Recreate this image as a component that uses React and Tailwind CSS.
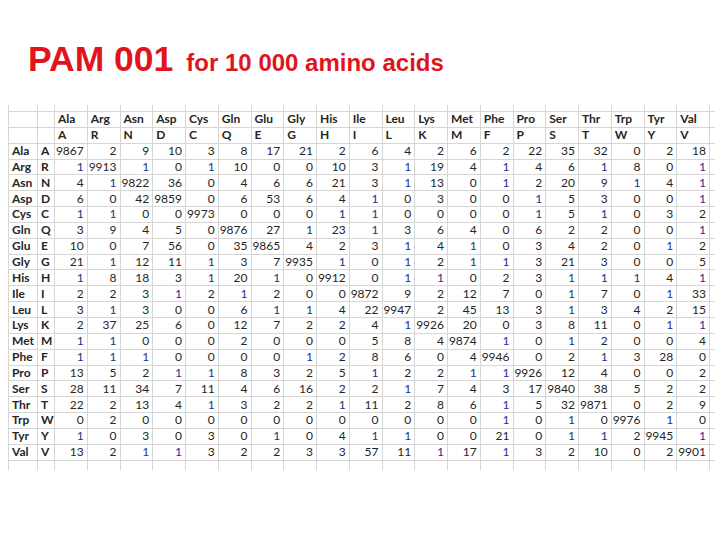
import React from 'react';

const AMINO = [
    ['Ala', 'A'], ['Arg', 'R'], ['Asn', 'N'], ['Asp', 'D'], ['Cys', 'C'],
    ['Gln', 'Q'], ['Glu', 'E'], ['Gly', 'G'], ['His', 'H'], ['Ile', 'I'],
    ['Leu', 'L'], ['Lys', 'K'], ['Met', 'M'], ['Phe', 'F'], ['Pro', 'P'],
    ['Ser', 'S'], ['Thr', 'T'], ['Trp', 'W'], ['Tyr', 'Y'], ['Val', 'V'],
];

const PAM = [
    [9867, 2, 9, 10, 3, 8, 17, 21, 2, 6, 4, 2, 6, 2, 22, 35, 32, 0, 2, 18],
    [1, 9913, 1, 0, 1, 10, 0, 0, 10, 3, 1, 19, 4, 1, 4, 6, 1, 8, 0, 1],
    [4, 1, 9822, 36, 0, 4, 6, 6, 21, 3, 1, 13, 0, 1, 2, 20, 9, 1, 4, 1],
    [6, 0, 42, 9859, 0, 6, 53, 6, 4, 1, 0, 3, 0, 0, 1, 5, 3, 0, 0, 1],
    [1, 1, 0, 0, 9973, 0, 0, 0, 1, 1, 0, 0, 0, 0, 1, 5, 1, 0, 3, 2],
    [3, 9, 4, 5, 0, 9876, 27, 1, 23, 1, 3, 6, 4, 0, 6, 2, 2, 0, 0, 1],
    [10, 0, 7, 56, 0, 35, 9865, 4, 2, 3, 1, 4, 1, 0, 3, 4, 2, 0, 1, 2],
    [21, 1, 12, 11, 1, 3, 7, 9935, 1, 0, 1, 2, 1, 1, 3, 21, 3, 0, 0, 5],
    [1, 8, 18, 3, 1, 20, 1, 0, 9912, 0, 1, 1, 0, 2, 3, 1, 1, 1, 4, 1],
    [2, 2, 3, 1, 2, 1, 2, 0, 0, 9872, 9, 2, 12, 7, 0, 1, 7, 0, 1, 33],
    [3, 1, 3, 0, 0, 6, 1, 1, 4, 22, 9947, 2, 45, 13, 3, 1, 3, 4, 2, 15],
    [2, 37, 25, 6, 0, 12, 7, 2, 2, 4, 1, 9926, 20, 0, 3, 8, 11, 0, 1, 1],
    [1, 1, 0, 0, 0, 2, 0, 0, 0, 5, 8, 4, 9874, 1, 0, 1, 2, 0, 0, 4],
    [1, 1, 1, 0, 0, 0, 0, 1, 2, 8, 6, 0, 4, 9946, 0, 2, 1, 3, 28, 0],
    [13, 5, 2, 1, 1, 8, 3, 2, 5, 1, 2, 2, 1, 1, 9926, 12, 4, 0, 0, 2],
    [28, 11, 34, 7, 11, 4, 6, 16, 2, 2, 1, 7, 4, 3, 17, 9840, 38, 5, 2, 2],
    [22, 2, 13, 4, 1, 3, 2, 2, 1, 11, 2, 8, 6, 1, 5, 32, 9871, 0, 2, 9],
    [0, 2, 0, 0, 0, 0, 0, 0, 0, 0, 0, 0, 0, 1, 0, 1, 0, 9976, 1, 0],
    [1, 0, 3, 0, 3, 0, 1, 0, 4, 1, 1, 0, 0, 21, 0, 1, 1, 2, 9945, 1],
    [13, 2, 1, 1, 3, 2, 2, 3, 3, 57, 11, 1, 17, 1, 3, 2, 10, 0, 2, 9901],
];

const line = 'border-[#d6d6d6]';

// one spreadsheet row: label, code, 20 values, then the little overhang cell on the right
const SheetRow = ({ label, code, values, bold }) => (
    <>
        <div className={`border-l border-r border-b ${line} pl-[3px] flex items-center font-bold`}>{label}</div>
        <div className={`border-r border-b ${line} pl-[3px] flex items-center font-bold`}>{code}</div>
        {values.map((v, i) => (
            bold ? (
                <div key={i} className={`border-r border-b ${line} pl-[3px] flex items-center font-bold`}>{v}</div>
            ) : (
                <div
                    key={i}
                    className={`border-r border-b ${line} pr-[3px] flex items-center justify-end ${v === 1 ? 'text-[#22318a]' : 'text-[#262626]'}`}
                >
                    {v}
                </div>
            )
        ))}
        <div className={`border-b ${line}`} />
    </>
);

const App = () => {
    const names = AMINO.map(a => a[0]);
    const codes = AMINO.map(a => a[1]);

    return (
        <div className="w-[720px] h-[540px] bg-white overflow-hidden">
            {/* Title */}
            <div className="pt-[42px] pl-[28px] flex items-baseline gap-[13px] text-[#e0141c] font-bold font-['Liberation_Sans',Arial,sans-serif]">
                <span className="text-[35.5px] leading-[35px]">PAM 001</span>
                <span className="text-[24px] leading-[24px]">for 10 000 amino acids</span>
            </div>

            {/* Matrix */}
            <div className="mt-[28px] ml-[8px] grid grid-cols-[30px_17px_repeat(20,32.75px)_5px] grid-rows-[7px_repeat(22,15.85px)_9px] text-[12px] leading-none text-[#262626] font-['Lato','Open_Sans',sans-serif]">
                {/* ticks above the header */}
                <div className={`border-l border-r border-b ${line}`} />
                <div className={`border-r border-b ${line}`} />
                {names.map(n => (
                    <div key={n} className={`border-r border-b ${line}`} />
                ))}
                <div className={`border-b ${line}`} />

                <SheetRow label="" code="" values={names} bold />
                <SheetRow label="" code="" values={codes} bold />

                {PAM.map((row, r) => (
                    <SheetRow key={names[r]} label={names[r]} code={codes[r]} values={row} />
                ))}

                {/* ticks below the last row */}
                <div className={`border-l border-r ${line}`} />
                <div className={`border-r ${line}`} />
                {names.map(n => (
                    <div key={n} className={`border-r ${line}`} />
                ))}
                <div />
            </div>
        </div>
    );
};

export default App;
